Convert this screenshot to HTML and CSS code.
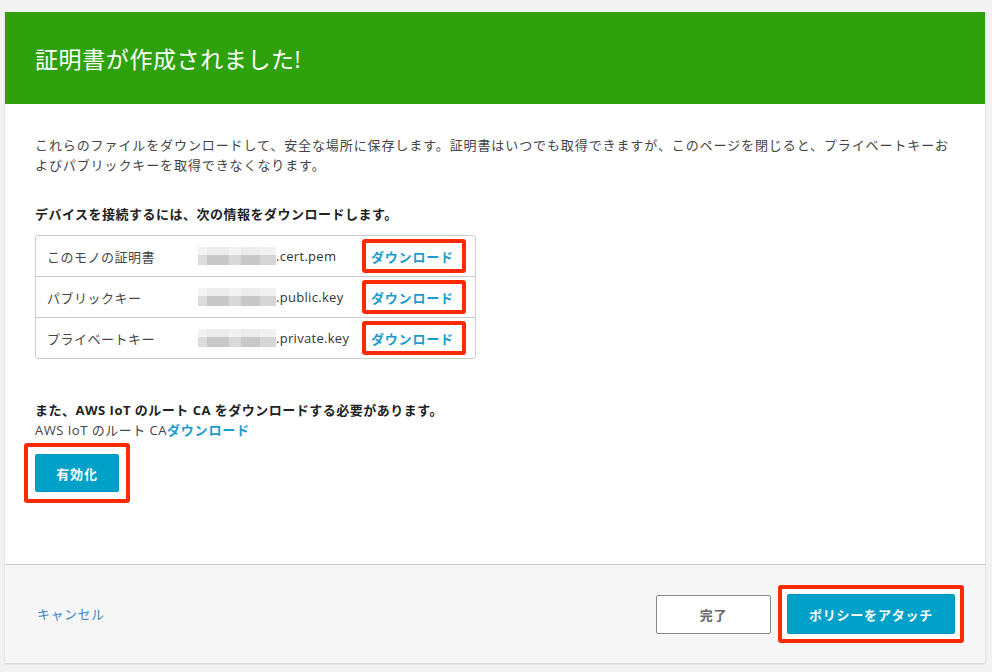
FILE: index.html
```html
<!DOCTYPE html>
<html lang="ja">
<head>
<meta charset="utf-8">
<link rel="stylesheet" href="styles.css">
</head>
<body>
<div class="card">
  <header class="hero"><h1>証明書が作成されました!</h1></header>
  <main class="content">
    <p class="intro">これらのファイルをダウンロードして、安全な場所に保存します。証明書はいつでも取得できますが、このページを閉じると、プライベートキーおよびパブリックキーを取得できなくなります。</p>
    <h2 class="sub">デバイスを接続するには、次の情報をダウンロードします。</h2>
    <div class="files">
      <div class="row">
        <span class="label">このモノの証明書</span>
        <span class="fname"><span class="blur"></span>.cert.pem</span>
        <span class="mark"><a class="dl" href="#">ダウンロード</a></span>
      </div>
      <div class="row">
        <span class="label">パブリックキー</span>
        <span class="fname"><span class="blur"></span>.public.key</span>
        <span class="mark"><a class="dl" href="#">ダウンロード</a></span>
      </div>
      <div class="row">
        <span class="label">プライベートキー</span>
        <span class="fname"><span class="blur"></span>.private.key</span>
        <span class="mark"><a class="dl" href="#">ダウンロード</a></span>
      </div>
    </div>
    <p class="note"><b>また、AWS IoT のルート CA をダウンロードする必要があります。</b><br>AWS IoT のルート CA<a class="dl" href="#">ダウンロード</a></p>
    <div class="frame"><button class="primary small">有効化</button></div>
  </main>
  <footer class="foot">
    <a class="cancel" href="#">キャンセル</a>
    <div class="actions">
      <button class="secondary">完了</button>
      <div class="frame"><button class="primary wide">ポリシーをアタッチ</button></div>
    </div>
  </footer>
</div>
</body>
</html>
```
FILE: styles.css
```css
* { box-sizing: border-box; }
html, body { height: 100%; }
body {
  margin: 0;
  padding: 12px 7px 9px 5px;
  background: #f2f2f2;
  font-family: "Open Sans", "Noto Sans CJK JP", sans-serif;
  color: #444;
  font-size: 13px;
  letter-spacing: 0.5px;
}
.card {
  background: #fff;
  box-shadow: 0 1px 2px rgba(0,0,0,0.15);
}
.hero {
  height: 92px;
  background: #2ea10c;
  display: flex;
  align-items: center;
  padding: 0 30px;
}
.hero h1 {
  margin: 0;
  font-size: 23px;
  font-weight: 400;
  color: #fff;
  letter-spacing: 0.6px;
}
.content {
  padding: 31px 30px 0;
  height: 460px;
}
.intro {
  margin: 0;
  line-height: 20px;
  color: #444;
  letter-spacing: 0.9px;
}
.sub {
  margin: 29px 0 11px;
  font-size: 13px;
  font-weight: 700;
  line-height: 20px;
  color: #222;
}
.files {
  width: 441px;
  border: 1px solid #ccc;
  border-radius: 3px;
}
.row {
  display: grid;
  grid-template-columns: 162px 164px 1fr;
  align-items: center;
  height: 41px;
  border-top: 1px solid #ccc;
}
.row:first-child { border-top: 0; height: 40px; }
.label { padding-left: 11px; color: #444; }
.fname { display: flex; align-items: center; color: #333; letter-spacing: 0.3px; }
.blur {
  display: inline-block;
  width: 78px;
  height: 18px;
  background:
    linear-gradient(to right, rgba(255,255,255,0.35) 0 12%, rgba(255,255,255,0) 12% 40%, rgba(255,255,255,0.3) 40% 55%, rgba(255,255,255,0) 55% 80%, rgba(255,255,255,0.25) 80% 100%),
    linear-gradient(to bottom, #ececec 0 45%, #c8c8c8 45% 100%);
}
.mark {
  display: flex;
  align-items: center;
  width: 104px;
  height: 34px;
  border: 4px solid #ff2a00;
  border-radius: 3px;
  padding-left: 5px;
}
.dl {
  color: #1a9ccf;
  font-weight: 700;
  text-decoration: none;
  letter-spacing: 0.8px;
}
.note {
  margin: 41px 0 0;
  line-height: 20px;
  color: #444;
}
.note b { color: #222; }
.frame {
  display: inline-flex;
  border: 4px solid #ff2a00;
  border-radius: 3px;
  padding: 7px;
  background: #fff;
}
.content .frame { margin: 3px 0 0 -11px; }
.primary {
  background: #00a1c9;
  border: 1px solid #0095bb;
  border-radius: 2px;
  color: #fff;
  font: 700 13px "Open Sans", "Noto Sans CJK JP", sans-serif;
  letter-spacing: 0.8px;
  cursor: pointer;
}
.small { width: 84px; height: 38px; }
.wide { width: 168px; height: 40px; }
.foot {
  border-top: 1px solid #ccc;
  background: #f6f6f6;
  height: 99px;
  display: flex;
  align-items: center;
  justify-content: space-between;
  padding: 0 21px 0 32px;
}
.cancel {
  color: #3f84c4;
  text-decoration: none;
  font-size: 13px;
  margin-top: -2px;
}
.actions {
  display: flex;
  align-items: center;
  gap: 7px;
}
.secondary {
  width: 115px;
  height: 39px;
  background: #fff;
  border: 1px solid #888;
  border-radius: 2px;
  color: #666;
  font: 700 13px "Open Sans", "Noto Sans CJK JP", sans-serif;
  letter-spacing: 0.8px;
}
.actions .frame { padding: 5px; }
```
